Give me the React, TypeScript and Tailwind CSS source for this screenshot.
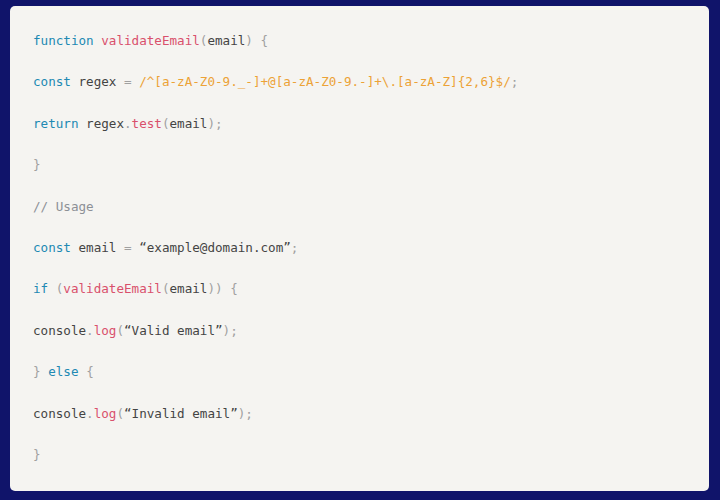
import React from "react";

const K = ({ children }: { children: React.ReactNode }) => <span className="text-[#2189b3]">{children}</span>;
const F = ({ children }: { children: React.ReactNode }) => <span className="text-[#d9506c]">{children}</span>;
const P = ({ children }: { children: React.ReactNode }) => <span className="text-[#a0a0a0]">{children}</span>;
const R = ({ children }: { children: React.ReactNode }) => <span className="text-[#eca236]">{children}</span>;
const C = ({ children }: { children: React.ReactNode }) => <span className="text-[#8c9096]">{children}</span>;

export default function App() {
  const lines: React.ReactNode[] = [
    <>
      <K>function</K> <F>validateEmail</F><P>(</P>email<P>)</P> <P>{"{"}</P>
    </>,
    <>
      <K>const</K> regex <P>=</P> <R>/^[a-zA-Z0-9._-]+@[a-zA-Z0-9.-]+\.[a-zA-Z]{"{2,6}"}$/</R><P>;</P>
    </>,
    <>
      <K>return</K> regex<P>.</P><F>test</F><P>(</P>email<P>)</P><P>;</P>
    </>,
    <>
      <P>{"}"}</P>
    </>,
    <>
      <C>// Usage</C>
    </>,
    <>
      <K>const</K> email <P>=</P> “example@domain.com”<P>;</P>
    </>,
    <>
      <K>if</K> <P>(</P><F>validateEmail</F><P>(</P>email<P>)</P><P>)</P> <P>{"{"}</P>
    </>,
    <>
      console<P>.</P><F>log</F><P>(</P>“Valid email”<P>)</P><P>;</P>
    </>,
    <>
      <P>{"}"}</P> <K>else</K> <P>{"{"}</P>
    </>,
    <>
      console<P>.</P><F>log</F><P>(</P>“Invalid email”<P>)</P><P>;</P>
    </>,
    <>
      <P>{"}"}</P>
    </>,
  ];
  return (
    <div className="w-[720px] h-[500px] bg-[#10146a] pt-[6px] pl-[10px]">
      <div
        className="w-[699px] h-[485px] bg-[#f5f4f1] rounded-[5px] pt-[14px] pl-[23px] text-[#444444] text-[12.6px]"
        style={{ fontFamily: '"DejaVu Sans Mono", "Liberation Mono", monospace' }}
      >
        {lines.map((l, i) => (
          <div key={i} className="h-[41.4px] leading-[41.4px] whitespace-pre">
            {l}
          </div>
        ))}
      </div>
    </div>
  );
}
